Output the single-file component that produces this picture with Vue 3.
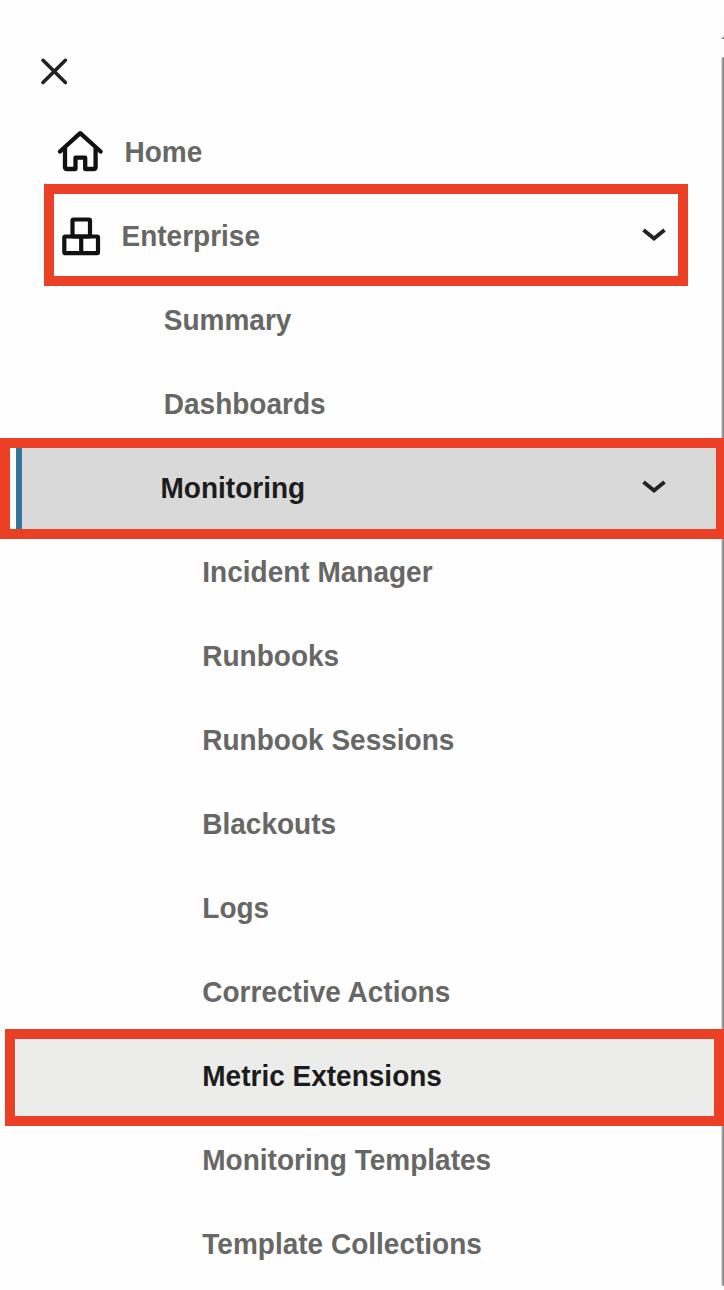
<script setup>
const items = [
  { label: 'Home', level: 'home', icon: 'home' },
  { label: 'Enterprise', level: 'group', icon: 'boxes', open: true, mark: 'mark-enterprise' },
  { label: 'Summary', level: 'sub' },
  { label: 'Dashboards', level: 'sub' },
  { label: 'Monitoring', level: 'current', open: true, mark: 'mark-monitoring' },
  { label: 'Incident Manager', level: 'leaf' },
  { label: 'Runbooks', level: 'leaf' },
  { label: 'Runbook Sessions', level: 'leaf' },
  { label: 'Blackouts', level: 'leaf' },
  { label: 'Logs', level: 'leaf' },
  { label: 'Corrective Actions', level: 'leaf' },
  { label: 'Metric Extensions', level: 'leaf selected', mark: 'mark-metric' },
  { label: 'Monitoring Templates', level: 'leaf' },
  { label: 'Template Collections', level: 'leaf' },
]
</script>

<template>
  <div class="drawer">
    <header class="top">
      <svg class="close" width="32" height="32" viewBox="0 0 32 32">
        <path d="M5 5.300 L27.400 27.500 M27.400 5.300 L5 27.500" />
      </svg>
    </header>
    <nav>
      <div v-for="item in items" :key="item.label" class="row" :class="item.level">
        <svg v-if="item.icon === 'home'" class="icon" width="48" height="44" viewBox="0 0 48 44">
          <path d="M4 22.500 L24.200 4.200 L44.600 22.500" />
          <path d="M9 19 V38 Q9 40 11 40 H19.500 V28.700 H29.200 V40 H37.600 Q39.600 40 39.600 38 V19" />
        </svg>
        <svg v-else-if="item.icon === 'boxes'" class="icon" width="40" height="40" viewBox="0 0 40 40">
          <rect x="11.500" y="3.500" width="17.500" height="17" rx="1.200" />
          <path d="M4.300 20.500 H36 Q37 20.500 37 21.500 V36.200 Q37 37.200 36 37.200 H4.300 Q3.300 37.200 3.300 36.200 V21.500 Q3.300 20.500 4.300 20.500 Z M20.200 20.500 V37.200" />
        </svg>
        <span class="label">{{ item.label }}</span>
        <svg v-if="item.open" class="chevron" width="28" height="18" viewBox="0 0 28 18">
          <path d="M3.500 4 L14 12.400 L24.500 4" />
        </svg>
        <div v-if="item.mark" class="mark" :class="item.mark"></div>
      </div>
    </nav>
    <div class="scrollbar">
      <svg width="8" height="26" viewBox="0 0 8 26"><path d="M5 22 L8 19 V22 Z" /></svg>
      <div class="thumb"></div>
    </div>
  </div>
</template>

<style>
body {
  overflow: hidden;
  background: #fefefe;
}
</style>

<style scoped>
.drawer {
  position: relative;
  box-sizing: border-box;
  width: 724px;
  height: 1290px;
  overflow: hidden;
  background: #fefefe;
  color: #676765;
  font: bold 28px/84px "Liberation Sans", Arial, sans-serif;
}
.top {
  box-sizing: border-box;
  height: 110px;
  padding: 55px 0 0 38px;
}
svg {
  display: block;
  flex: none;
  fill: none;
  stroke: #111;
}
.close {
  stroke: #222;
  stroke-width: 3.6;
  stroke-linecap: round;
}
.row {
  position: relative;
  z-index: 2;
  box-sizing: border-box;
  display: flex;
  align-items: center;
  height: 84px;
  margin: 0 8px 0 16px;
}
.label {
  white-space: nowrap;
  transform: translateY(1.3px) scaleY(1.05);
  transform-origin: 0 62%;
}
.home {
  padding-left: 40px;
}
.home .icon {
  margin: 0 20.500px 2px 0;
  stroke-width: 4.3;
  stroke-linecap: round;
  stroke-linejoin: round;
}
.group {
  padding-left: 45px;
}
.group .icon {
  margin-right: 20.500px;
  stroke-width: 4.2;
}
.sub {
  padding-left: 147.800px;
}
.current {
  padding-left: 138.500px;
  border-left: 6px solid #37749a;
  background: #d9d9d9;
  color: #1c1c1c;
}
.leaf {
  padding-left: 186.300px;
}
.selected {
  background: #ececea;
  color: #1c1c1c;
}
.chevron {
  margin: 0 48px 2px auto;
  stroke: #222;
  stroke-width: 3.9;
}
.mark {
  position: absolute;
  box-sizing: border-box;
  border: 10px solid #eb4026;
}
.mark-enterprise {
  left: 28px;
  top: -10px;
  width: 644px;
  height: 102px;
}
.mark-monitoring {
  left: -22px;
  top: -8px;
  width: 726px;
  height: 101px;
}
.mark-metric {
  left: -11px;
  top: -5px;
  width: 719px;
  height: 97px;
}
.scrollbar {
  position: absolute;
  z-index: 1;
  top: 17px;
  right: 0;
  bottom: 0;
  width: 8px;
  background: #fcfcfc;
}
.scrollbar path {
  fill: #888;
  stroke: none;
}
.thumb {
  height: 1229px;
  margin: 14px 0 0 5px;
  border-radius: 3px 0 0 3px;
  background: linear-gradient(90deg, #d6d6d6 0 1px, #a0a0a0 1px 2px, #868686 2px);
}
</style>
